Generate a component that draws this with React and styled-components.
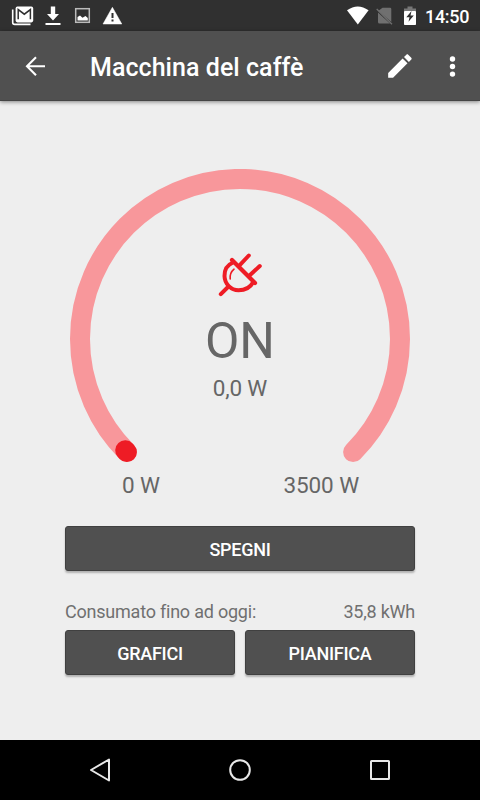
import React from 'react';
import styled, { createGlobalStyle } from 'styled-components';

const GlobalStyle = createGlobalStyle`
  * {
    box-sizing: border-box;
  }
  body {
    margin: 0;
    background: #eeeeee;
    font-family: Roboto, sans-serif;
  }
  svg {
    display: block;
    flex: none;
  }
`

const Screen = styled.div`
  display: flex;
  flex-direction: column;
  width: 480px;
  height: 800px;
  background: #eeeeee;
  overflow: hidden;
`

const StatusBar = styled.header`
  display: flex;
  justify-content: space-between;
  height: 31px;
  padding: 0 10px 0 11px;
  background: #303030;
`

const StatusGroup = styled.div`
  display: flex;
  height: 31px;
`

const Clock = styled.time`
  width: 45px;
  margin-left: 8px;
  color: #ffffff;
  font-size: 18px;
  font-weight: 500;
  letter-spacing: -0.3px;
  line-height: 33px;
`

const Toolbar = styled.nav`
  display: flex;
  align-items: center;
  flex: none;
  height: 70px;
  padding: 0 9px 0 17px;
  background: #505050;
  border-bottom: 1px solid #454545;
  box-shadow: 0 1px 4px rgba(0, 0, 0, 0.45);
`

const Title = styled.h1`
  flex: 1;
  margin: 5px 0 0 37px;
  color: #ffffff;
  font-size: 25px;
  font-weight: 500;
  letter-spacing: 0.05px;
  line-height: 30px;
`

const IconButton = styled.button`
  display: flex;
  justify-content: center;
  width: 36px;
  margin: 0 0 0 ${({ $gap }) => $gap || 0}px;
  padding: 0;
  border: 0;
  background: none;
`

const Content = styled.main`
  flex: 1;
  width: 350px;
  margin: 0 auto;
  padding-top: 68px;
`

const Gauge = styled.section`
  display: grid;
  justify-content: center;
  height: 302px;
`

const GaugeArc = styled.svg`
  grid-area: 1 / 1;
`

const GaugeInfo = styled.div`
  grid-area: 1 / 1;
  display: flex;
  flex-direction: column;
  align-items: center;
  padding-top: 83px;
  color: #666666;
`

const State = styled.div`
  margin-top: 13px;
  font-size: 50px;
  line-height: 60px;
`

const Power = styled.div`
  font-size: 22.5px;
  letter-spacing: -0.2px;
  line-height: 26px;
  margin-top: 4px;
`

const Scale = styled.div`
  display: flex;
  justify-content: space-between;
  padding: 0 56px 0 57px;
  color: #666666;
  font-size: 22.5px;
  letter-spacing: -0.1px;
  line-height: 28px;
`

const Button = styled.button`
  flex: 1;
  width: 100%;
  height: 45px;
  padding: 2px 0 0;
  border: 1px solid #404040;
  border-radius: 3px;
  background: #505050;
  box-shadow: 0 2px 2px rgba(0, 0, 0, 0.26);
  color: #ffffff;
  font-family: inherit;
  font-size: 18px;
  font-weight: 500;
  letter-spacing: -0.25px;
  line-height: 24px;
`

const PowerSwitch = styled.div`
  display: flex;
  margin-top: 27px;
`

const Consumption = styled.div`
  display: flex;
  justify-content: space-between;
  margin-top: 29px;
  color: #707070;
  font-size: 18px;
  letter-spacing: -0.22px;
  line-height: 24px;
`

const Actions = styled.div`
  display: flex;
  gap: 10px;
  margin-top: 6px;
`

const NavBar = styled.footer`
  display: flex;
  justify-content: space-between;
  align-items: center;
  flex: none;
  height: 60px;
  padding: 0 85px;
  background: #000000;
`

function NotificationIcons() {
  return (
    <svg width="112" height="31" viewBox="11 0 112 31">
      <path d="M12.7 9.5V22.5Q12.7 24.4 14.7 24.4H30.5" fill="none" stroke="#fff" strokeWidth="1.6" />
      <rect x="15.6" y="6.6" width="17.6" height="15.8" rx="1.8" fill="#fff" />
      <path d="M18.2 19.2V9.6L24.3 14.2L30.4 9.6V19.2" fill="none" stroke="#303030" strokeWidth="1.5" />
      <path d="M50.8 6.5H55.2V14H59L53 20.5L47 14H50.8ZM45.5 23H60.5V25H45.5Z" fill="#fff" />
      <rect x="75.7" y="8.7" width="13.6" height="13.6" fill="none" stroke="#bbb" strokeWidth="1.5" />
      <path d="M77.5 20.5V17L80 15.5L82.5 17.8L85.5 16L87.8 18V20.5Z" fill="#fff" />
      <path d="M112.4 7.3L121.8 24H103Z" fill="#fff" stroke="#fff" strokeWidth="0.5" strokeLinejoin="round" />
      <path d="M111.5 13H113.5V18H111.5ZM111.5 19.5H113.5V21.5H111.5Z" fill="#303030" />
    </svg>
  )
}

function SystemIcons() {
  return (
    <svg width="71" height="31" viewBox="347 0 71 31">
      <path d="M348 10.3Q358.7 2.5 369.6 10.3L358.8 24.5Z" fill="#fff" />
      <path d="M383.5 7.7H391Q392.3 7.7 392.3 9V22L379.5 10.8ZM379 12.5L391 23.5H380.5Q379 23.5 379 22Z" fill="#707070" />
      <path d="M377.7 9L393 24.3" fill="none" stroke="#707070" strokeWidth="1.3" />
      <path d="M405 11.5V8.5H408.5V6.5H413.5V8.5H417V11.5Z" fill="#777" />
      <rect x="405" y="11" width="12" height="14" rx="0.8" fill="#fff" />
      <path d="M412.5 11L407.3 17.3H410.5L409.5 21.8L414.8 15.6H411.5Z" fill="#303030" />
    </svg>
  )
}

function BackIcon() {
  return (
    <svg width="36" height="36" viewBox="17 48 36 36">
      <path d="M45 66.3H27.5M36 57.3L27 66.3L36 75.3" fill="none" stroke="#fff" strokeWidth="2.1" />
    </svg>
  )
}

function EditIcon() {
  return (
    <svg width="36" height="36" viewBox="0 0 24 24">
      <path d="M3 17.25V21h3.75L17.81 9.94l-3.75-3.75L3 17.25zM20.71 7.04c.39-.39.39-1.02 0-1.41l-2.34-2.34c-.39-.39-1.02-.39-1.41 0l-1.83 1.83 3.75 3.75 1.83-1.83z" fill="#fff" transform="translate(1.5 1.6) scale(.87)" />
    </svg>
  )
}

function MoreIcon() {
  return (
    <svg width="36" height="36" viewBox="0 0 36 36">
      <circle cx="17.5" cy="11" r="2.7" fill="#fff" />
      <circle cx="17.5" cy="18.5" r="2.7" fill="#fff" />
      <circle cx="17.5" cy="26.1" r="2.7" fill="#fff" />
    </svg>
  )
}

function PlugIcon() {
  return (
    <svg width="46" height="46" viewBox="217 252 46 46" fill="none" stroke="#ee1c25" strokeLinecap="round">
      <path d="M232 260L255 283" strokeWidth="4.2" />
      <path d="M233 262.5C227 265 224.4 270 224.5 276C224.7 284 231 290.2 238.5 290.2C245 290.2 250 288 253 282.5" strokeWidth="4" />
      <path d="M220.8 294.2L228 287M240 264.8L248.8 255.5M249.5 275.5L259.8 266" strokeWidth="4" />
      <path d="M234 269.2Q229.5 273 230.2 279" strokeWidth="1.6" />
    </svg>
  )
}

export default function App() {
  return (
    <Screen>
      <GlobalStyle />
      <StatusBar>
        <StatusGroup>
          <NotificationIcons />
        </StatusGroup>
        <StatusGroup>
          <SystemIcons />
          <Clock>14:50</Clock>
        </StatusGroup>
      </StatusBar>
      <Toolbar>
        <IconButton aria-label="Indietro"><BackIcon /></IconButton>
        <Title>Macchina del caffè</Title>
        <IconButton aria-label="Modifica"><EditIcon /></IconButton>
        <IconButton aria-label="Altro" $gap={17}><MoreIcon /></IconButton>
      </Toolbar>
      <Content>
        <Gauge>
          <GaugeArc width="340" height="302" viewBox="0 0 340 302" fill="none" strokeWidth="20" strokeLinecap="round">
            <path d="M56.9 283.1A160 160 0 1 1 283.1 283.1" stroke="#f8979b" />
            <path d="M56.9 283.1A160 160 0 0 1 55.2 281.3" stroke="#ee1c25" />
          </GaugeArc>
          <GaugeInfo>
            <PlugIcon />
            <State>ON</State>
            <Power>0,0 W</Power>
          </GaugeInfo>
        </Gauge>
        <Scale>
          <span>0 W</span>
          <span>3500 W</span>
        </Scale>
        <PowerSwitch>
          <Button>SPEGNI</Button>
        </PowerSwitch>
        <Consumption>
          <span>Consumato fino ad oggi:</span>
          <span>35,8 kWh</span>
        </Consumption>
        <Actions>
          <Button>GRAFICI</Button>
          <Button>PIANIFICA</Button>
        </Actions>
      </Content>
      <NavBar>
        <svg width="30" height="30" viewBox="85 755 30 30">
          <path d="M109 759.5V780.5L91 770Z" fill="none" stroke="#e8e8e8" strokeWidth="2" strokeLinejoin="round" />
        </svg>
        <svg width="30" height="30" viewBox="0 0 30 30">
          <circle cx="15" cy="15" r="9.8" fill="none" stroke="#e8e8e8" strokeWidth="2" />
        </svg>
        <svg width="30" height="30" viewBox="0 0 30 30">
          <rect x="6" y="6" width="18" height="18" rx="0.5" fill="none" stroke="#e8e8e8" strokeWidth="2" />
        </svg>
      </NavBar>
    </Screen>
  )
}
